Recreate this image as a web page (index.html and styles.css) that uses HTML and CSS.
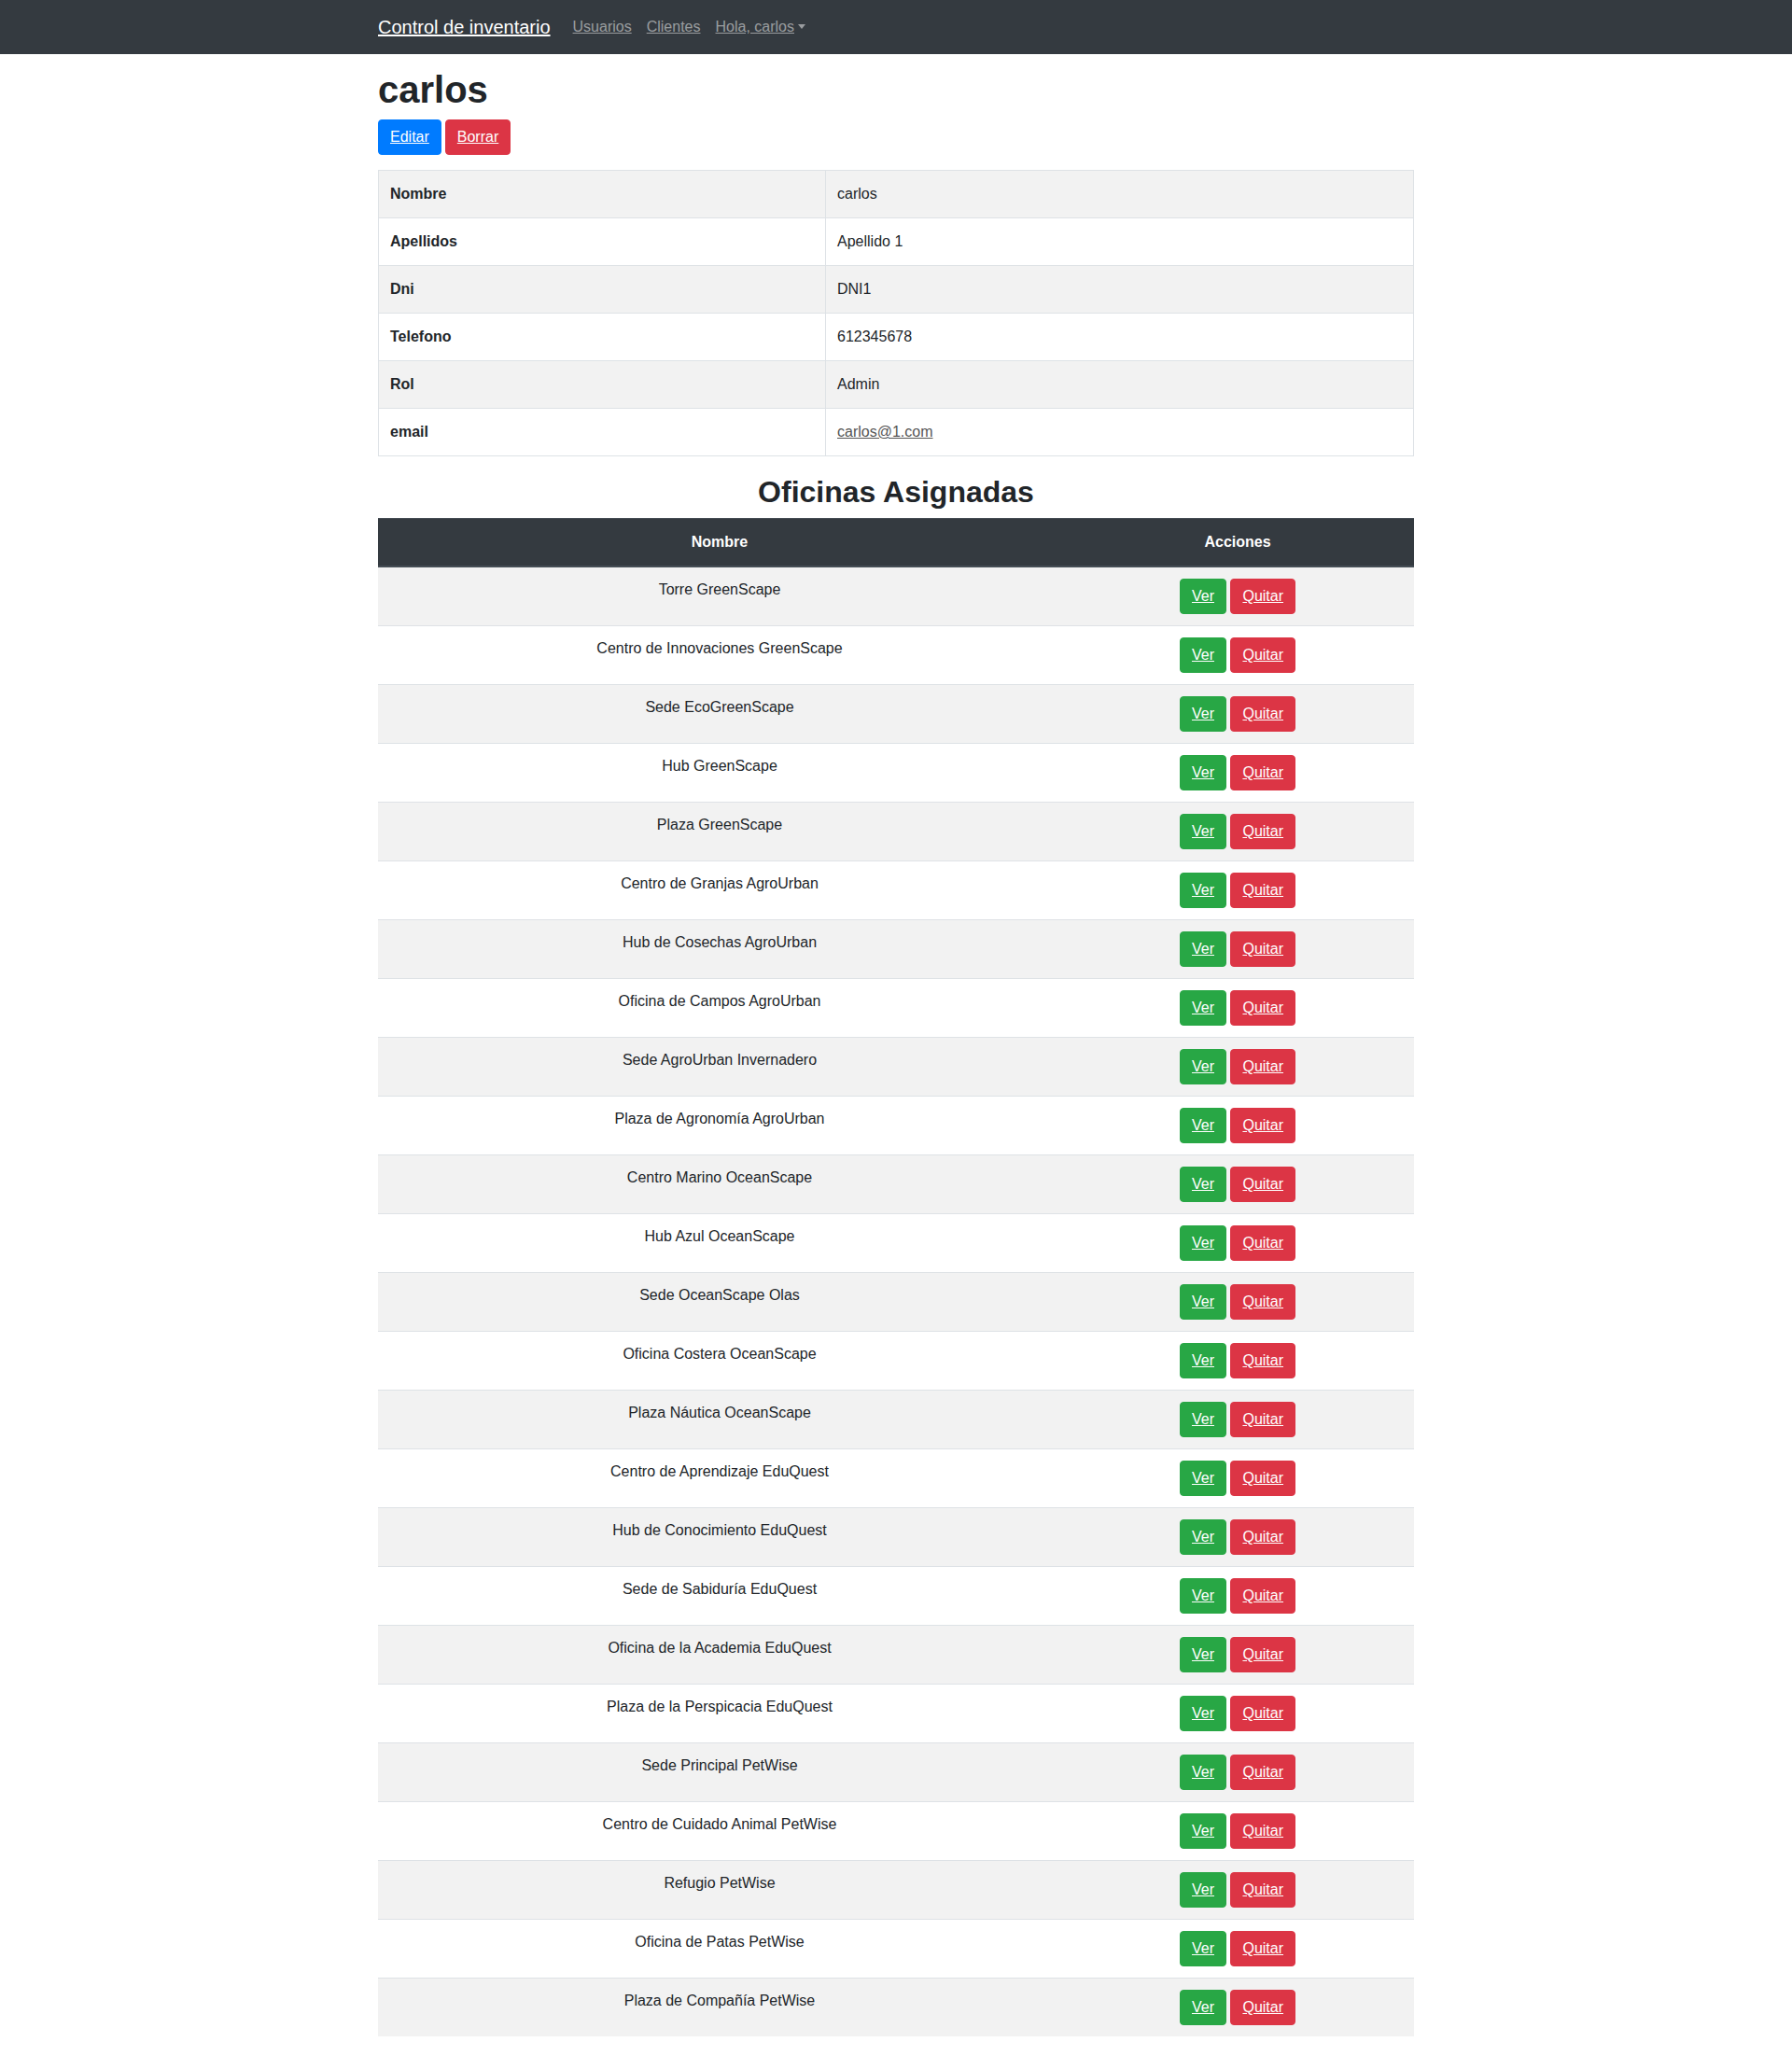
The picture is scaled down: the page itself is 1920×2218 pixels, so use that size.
FILE: index.html
```html
<!DOCTYPE html>
<html lang="es">
<head>
<meta charset="utf-8">
<title>carlos - Control de inventario</title>
<link rel="stylesheet" href="styles.css">
</head>
<body>
<nav class="navbar">
  <div class="container nav-inner">
    <a class="brand" href="#">Control de inventario</a>
    <ul class="nav-links">
      <li><a class="nav-link" href="#">Usuarios</a></li>
      <li><a class="nav-link" href="#">Clientes</a></li>
      <li><a class="nav-link dropdown-toggle" href="#">Hola, carlos</a></li>
    </ul>
  </div>
</nav>

<main class="container">
  <h1 class="title">carlos</h1>
  <div class="actions">
    <a class="btn btn-primary" href="#">Editar</a>
    <a class="btn btn-danger" href="#">Borrar</a>
  </div>

  <table class="table table-bordered table-striped details">
    <colgroup><col class="col-label"><col></colgroup>
    <tbody>
      <tr><th>Nombre</th><td>carlos</td></tr>
      <tr><th>Apellidos</th><td>Apellido 1</td></tr>
      <tr><th>Dni</th><td>DNI1</td></tr>
      <tr><th>Telefono</th><td>612345678</td></tr>
      <tr><th>Rol</th><td>Admin</td></tr>
      <tr><th>email</th><td><a class="mail" href="#">carlos@1.com</a></td></tr>
    </tbody>
  </table>

  <h2 class="section-title">Oficinas Asignadas</h2>

  <table class="table table-striped offices">
    <colgroup><col class="col-name"><col></colgroup>
    <thead>
      <tr><th>Nombre</th><th>Acciones</th></tr>
    </thead>
    <tbody>
      <tr><td>Torre GreenScape</td><td><a class="btn btn-success" href="#">Ver</a> <a class="btn btn-danger" href="#">Quitar</a></td></tr>
      <tr><td>Centro de Innovaciones GreenScape</td><td><a class="btn btn-success" href="#">Ver</a> <a class="btn btn-danger" href="#">Quitar</a></td></tr>
      <tr><td>Sede EcoGreenScape</td><td><a class="btn btn-success" href="#">Ver</a> <a class="btn btn-danger" href="#">Quitar</a></td></tr>
      <tr><td>Hub GreenScape</td><td><a class="btn btn-success" href="#">Ver</a> <a class="btn btn-danger" href="#">Quitar</a></td></tr>
      <tr><td>Plaza GreenScape</td><td><a class="btn btn-success" href="#">Ver</a> <a class="btn btn-danger" href="#">Quitar</a></td></tr>
      <tr><td>Centro de Granjas AgroUrban</td><td><a class="btn btn-success" href="#">Ver</a> <a class="btn btn-danger" href="#">Quitar</a></td></tr>
      <tr><td>Hub de Cosechas AgroUrban</td><td><a class="btn btn-success" href="#">Ver</a> <a class="btn btn-danger" href="#">Quitar</a></td></tr>
      <tr><td>Oficina de Campos AgroUrban</td><td><a class="btn btn-success" href="#">Ver</a> <a class="btn btn-danger" href="#">Quitar</a></td></tr>
      <tr><td>Sede AgroUrban Invernadero</td><td><a class="btn btn-success" href="#">Ver</a> <a class="btn btn-danger" href="#">Quitar</a></td></tr>
      <tr><td>Plaza de Agronomía AgroUrban</td><td><a class="btn btn-success" href="#">Ver</a> <a class="btn btn-danger" href="#">Quitar</a></td></tr>
      <tr><td>Centro Marino OceanScape</td><td><a class="btn btn-success" href="#">Ver</a> <a class="btn btn-danger" href="#">Quitar</a></td></tr>
      <tr><td>Hub Azul OceanScape</td><td><a class="btn btn-success" href="#">Ver</a> <a class="btn btn-danger" href="#">Quitar</a></td></tr>
      <tr><td>Sede OceanScape Olas</td><td><a class="btn btn-success" href="#">Ver</a> <a class="btn btn-danger" href="#">Quitar</a></td></tr>
      <tr><td>Oficina Costera OceanScape</td><td><a class="btn btn-success" href="#">Ver</a> <a class="btn btn-danger" href="#">Quitar</a></td></tr>
      <tr><td>Plaza Náutica OceanScape</td><td><a class="btn btn-success" href="#">Ver</a> <a class="btn btn-danger" href="#">Quitar</a></td></tr>
      <tr><td>Centro de Aprendizaje EduQuest</td><td><a class="btn btn-success" href="#">Ver</a> <a class="btn btn-danger" href="#">Quitar</a></td></tr>
      <tr><td>Hub de Conocimiento EduQuest</td><td><a class="btn btn-success" href="#">Ver</a> <a class="btn btn-danger" href="#">Quitar</a></td></tr>
      <tr><td>Sede de Sabiduría EduQuest</td><td><a class="btn btn-success" href="#">Ver</a> <a class="btn btn-danger" href="#">Quitar</a></td></tr>
      <tr><td>Oficina de la Academia EduQuest</td><td><a class="btn btn-success" href="#">Ver</a> <a class="btn btn-danger" href="#">Quitar</a></td></tr>
      <tr><td>Plaza de la Perspicacia EduQuest</td><td><a class="btn btn-success" href="#">Ver</a> <a class="btn btn-danger" href="#">Quitar</a></td></tr>
      <tr><td>Sede Principal PetWise</td><td><a class="btn btn-success" href="#">Ver</a> <a class="btn btn-danger" href="#">Quitar</a></td></tr>
      <tr><td>Centro de Cuidado Animal PetWise</td><td><a class="btn btn-success" href="#">Ver</a> <a class="btn btn-danger" href="#">Quitar</a></td></tr>
      <tr><td>Refugio PetWise</td><td><a class="btn btn-success" href="#">Ver</a> <a class="btn btn-danger" href="#">Quitar</a></td></tr>
      <tr><td>Oficina de Patas PetWise</td><td><a class="btn btn-success" href="#">Ver</a> <a class="btn btn-danger" href="#">Quitar</a></td></tr>
      <tr><td>Plaza de Compañía PetWise</td><td><a class="btn btn-success" href="#">Ver</a> <a class="btn btn-danger" href="#">Quitar</a></td></tr>
    </tbody>
  </table>
</main>
</body>
</html>
```

FILE: styles.css
```css
* { box-sizing: border-box; }

html, body { margin: 0; padding: 0; }

body {
  font-family: "Liberation Sans", Arial, sans-serif;
  font-size: 16px;
  line-height: 1.5;
  color: #212529;
  background: #fff;
}

a { color: inherit; text-decoration: underline; }

.container {
  width: 1140px;
  margin: 0 auto;
  padding: 0 15px;
}

/* Navbar */
.navbar {
  background: #343a40;
  height: 58px;
}
.nav-inner {
  display: flex;
  align-items: center;
  height: 58px;
}
.brand {
  color: #fff;
  font-size: 20px;
  line-height: 30px;
  padding: 5px 0;
  margin-right: 16px;
  white-space: nowrap;
}
.nav-links {
  list-style: none;
  margin: 0;
  padding: 0;
  display: flex;
}
.nav-link {
  display: block;
  padding: 8px;
  color: rgba(255, 255, 255, 0.5);
  line-height: 24px;
}
.dropdown-toggle::after {
  content: "";
  display: inline-block;
  margin-left: 4px;
  vertical-align: 3px;
  border-top: 5px solid;
  border-right: 4.5px solid transparent;
  border-left: 4.5px solid transparent;
  border-bottom: 0;
}

/* Heading */
.title {
  font-size: 40px;
  font-weight: 700;
  line-height: 48px;
  margin: 14px 0 8px;
}

.actions {
  display: flex;
  gap: 4px;
  margin-bottom: 16px;
}

/* Buttons */
.btn {
  display: inline-block;
  color: #fff;
  font-size: 16px;
  line-height: 24px;
  padding: 6px 12px;
  border: 1px solid transparent;
  border-radius: 4px;
  text-align: center;
  vertical-align: middle;
}
.btn-primary { background: #007bff; border-color: #007bff; }
.btn-danger { background: #dc3545; border-color: #dc3545; }
.btn-success { background: #28a745; border-color: #28a745; }

/* Tables */
.table {
  width: 100%;
  border-collapse: collapse;
  margin-bottom: 19px;
}
.table th, .table td {
  padding: 12px;
  vertical-align: top;
  border-top: 1px solid #dee2e6;
  text-align: left;
}
.table-striped tbody tr:nth-of-type(odd) { background: #f2f2f2; }

.table-bordered th, .table-bordered td { border: 1px solid #dee2e6; }

.details th, .details td { padding: 13px 12px 13px; }
.details th { font-weight: 700; }
.col-label { width: 479px; }
.mail { color: #555; }

.section-title {
  font-size: 32px;
  font-weight: 700;
  line-height: 38px;
  text-align: center;
  margin: 0 0 9px;
}

.offices { margin-bottom: 36px; }
.col-name { width: 732px; }
.offices thead th {
  background: #343a40;
  color: #fff;
  font-weight: 700;
  text-align: center;
  border-top: 1px solid #454d55;
  border-bottom: 2px solid #454d55;
  padding: 13px 12px 13px;
}
.offices tbody td {
  text-align: center;
}
.offices tbody tr:first-child td { border-top: 0; }
```
